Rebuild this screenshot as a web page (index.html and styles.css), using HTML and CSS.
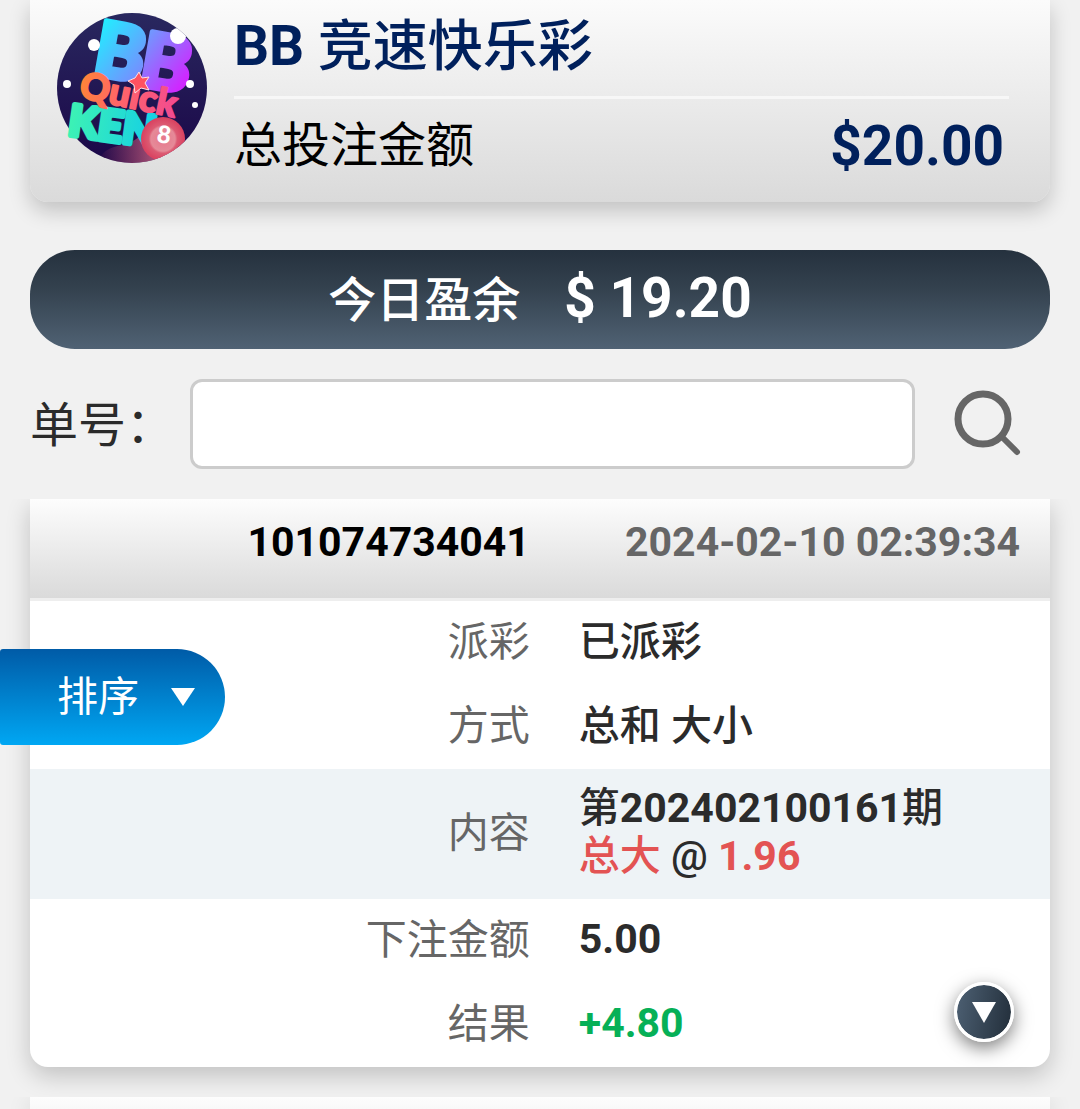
FILE: index.html
```html
<!DOCTYPE html>
<html lang="zh-CN">
<head>
<meta charset="utf-8">
<meta name="viewport" content="width=device-width, initial-scale=1">
<title>BB 竞速快乐彩</title>
<link rel="stylesheet" href="styles.css">
</head>
<body>
<main class="page">
  <header class="game">
    <svg class="game-logo" viewBox="0 0 150 150" role="img" aria-label="BB Quick KENO">
      <defs>
        <clipPath id="disc"><circle cx="75" cy="75" r="75"/></clipPath>
        <linearGradient id="night" x1="0" y1="0" x2="0" y2="1"><stop offset="0" stop-color="#29285f"/><stop offset="1" stop-color="#1b0748"/></linearGradient>
        <linearGradient id="blue" x1="0" y1="0" x2="1" y2="1"><stop offset=".1" stop-color="#1df3ff"/><stop offset=".9" stop-color="#7d86ff"/></linearGradient>
        <linearGradient id="violet" x1="0" y1="0" x2="1" y2="1"><stop offset=".1" stop-color="#6aa0ff"/><stop offset=".8" stop-color="#cf28ff"/></linearGradient>
        <linearGradient id="warm"><stop offset="0" stop-color="#ff8438"/><stop offset=".4" stop-color="#ff6568"/><stop offset="1" stop-color="#f24a92"/></linearGradient>
        <linearGradient id="mint"><stop offset="0" stop-color="#3df2b4"/><stop offset="1" stop-color="#14cfe6"/></linearGradient>
        <linearGradient id="trail"><stop offset="0" stop-color="#e05a78" stop-opacity="0"/><stop offset="1" stop-color="#f07f92"/></linearGradient>
        <radialGradient id="ball"><stop offset="0" stop-color="#e8788c"/><stop offset=".55" stop-color="#e58a98"/><stop offset=".65" stop-color="#dc5a72"/><stop offset="1" stop-color="#d9405f"/></radialGradient>
      </defs>
      <g clip-path="url(#disc)">
        <rect width="150" height="150" fill="url(#night)"/>
        <path d="M40 150 Q46 134 66 132 Q82 128 98 108 L126 144 L110 150Z" fill="url(#trail)"/>
      </g>
      <g class="logo-word logo-initials">
        <text x="34" y="61" transform="rotate(10 34 61)" fill="url(#blue)" stroke="url(#blue)">B</text>
        <text x="80" y="72" transform="rotate(10 80 72)" fill="url(#violet)" stroke="url(#violet)">B</text>
      </g>
      <text class="logo-word logo-keno" x="10" y="122" transform="rotate(8 10 122)" fill="url(#mint)" stroke="url(#mint)">KEN</text>
      <text class="logo-word logo-quick" x="21" y="84" transform="rotate(12 21 84)" fill="url(#warm)" stroke="url(#warm)">Quick</text>
      <g clip-path="url(#disc)">
        <path d="M82 59l3 6 7-1-4 6 4 7-8-2-6 5-1-8-6-4 7-3z" fill="#ff5260" stroke="#ffe0e4" stroke-width="1"/>
        <circle cx="106" cy="126" r="22" fill="url(#ball)"/>
        <g fill="#fff"><circle cx="37" cy="32" r="6"/><circle cx="121" cy="23" r="8"/><circle cx="10" cy="71" r="4"/><circle cx="133" cy="71" r="4"/><circle cx="138" cy="92" r="3"/></g>
      </g>
      <text class="logo-eight" x="99" y="129" transform="rotate(8 99 129)">8</text>
    </svg>
    <div class="game-info">
      <h1 class="game-title"><b>BB</b> 竞速快乐彩</h1>
      <div class="game-total"><span>总投注金额</span><strong class="amount">$20.00</strong></div>
    </div>
  </header>

  <section class="surplus"><span class="surplus-label">今日盈余</span><strong class="amount">$ 19.20</strong></section>

  <form class="search" role="search">
    <label class="search-label" for="order">单号：</label>
    <input class="search-input" id="order" type="text">
    <button class="search-button" type="button" aria-label="搜索">
      <svg viewBox="0 0 68 68" fill="none" stroke="#666" stroke-linecap="round"><circle cx="30" cy="29" r="25" stroke-width="7"/><path d="M48 46L64 62" stroke-width="6"/></svg>
    </button>
  </form>

  <article class="record">
    <div class="record-head"><strong>101074734041</strong><time datetime="2024-02-10T02:39:34">2024-02-10 02:39:34</time></div>
    <table class="record-table">
      <tbody>
        <tr><th scope="row">派彩</th><td>已派彩</td></tr>
        <tr><th scope="row">方式</th><td>总和 大小</td></tr>
        <tr class="shaded"><th scope="row">内容</th><td>第<b>202402100161</b>期<br><span class="pick">总大</span> @ <b class="pick">1.96</b></td></tr>
        <tr><th scope="row">下注金额</th><td class="number">5.00</td></tr>
        <tr><th scope="row">结果</th><td class="number win">+4.80</td></tr>
      </tbody>
    </table>
  </article>

  <article class="record record-next"></article>
</main>

<button class="sort" type="button">排序
  <svg class="arrow" viewBox="0 0 24 18"><path d="M0 0h24L12 18z" fill="#fff"/></svg>
</button>
<button class="scroll-down" type="button" aria-label="向下">
  <svg class="arrow" viewBox="0 0 24 21"><path d="M0 0h24L12 21z" fill="#fff"/></svg>
</button>
</body>
</html>
```
FILE: styles.css
```css
* { box-sizing: border-box; }

body {
  margin: 0;
  background: #f1f1f1;
  color: #2b2b2b;
  font: 500 41px/48px Roboto, "Noto Sans CJK SC", sans-serif;
}

b,
strong { font-weight: 700; }

button {
  padding: 0;
  border: 0;
  font: inherit;
  cursor: pointer;
}

.page {
  display: flex;
  flex-direction: column;
  min-height: 100vh;
  padding: 0 30px;
}

/* Game summary */
.game {
  display: flex;
  gap: 27px;
  padding: 0 41px 24px 27px;
  border-radius: 0 0 18px 18px;
  background: linear-gradient(#fbfbfb, #dadada);
  box-shadow: 0 9px 21px rgba(0, 0, 0, .2);
}

.game-logo {
  flex: none;
  width: 150px;
  height: 150px;
  margin-top: 13px;
  overflow: visible;
}

.game-info { flex: 1; }

.game-title {
  margin: 0;
  padding: 10px 0 14px;
  border-bottom: 3px solid #f7f7f7;
  color: #00205c;
  font-size: 55px;
  font-weight: 500;
  line-height: 72px;
}

.game-total {
  display: flex;
  align-items: center;
  justify-content: space-between;
  padding: 14px 5px 0 0;
  color: #000;
  font-size: 48px;
  font-weight: 400;
  line-height: 65px;
}

.amount {
  font-size: 55px;
  font-weight: 700;
}

.game-total .amount {
  padding-top: 2px;
  line-height: 63px;
  color: #00205c;
}

.logo-word {
  font-family: Lato, sans-serif;
  font-weight: 900;
  paint-order: stroke;
  stroke-linejoin: round;
}

.logo-initials {
  font-size: 76px;
  stroke-width: 5px;
}

.logo-quick {
  font-size: 37px;
  stroke-width: 2px;
}

.logo-keno {
  font-size: 43px;
  stroke-width: 5px;
}

.logo-eight {
  fill: #fff;
  font: 900 24px Lato, sans-serif;
}

/* Daily surplus */
.surplus {
  display: flex;
  align-items: center;
  justify-content: center;
  gap: 44px;
  margin-top: 48px;
  padding-bottom: 3px;
  border-radius: 45px;
  background: linear-gradient(#25313e, #34424f 40%, #506274);
  color: #fff;
  font-size: 48px;
  line-height: 96px;
}

.surplus-label {
  padding-top: 6px;
  line-height: 90px;
}

/* Order search */
.search {
  display: flex;
  align-items: center;
  margin: 30px 0;
}

.search-label {
  width: 160px;
  padding-top: 4px;
  font-size: 48px;
  font-weight: 400;
  white-space: nowrap;
}

.search-input {
  flex: 1;
  min-width: 0;
  height: 90px;
  padding: 0 20px;
  border: 3px solid #ccc;
  border-radius: 12px;
  background: #fff;
  font: inherit;
}

.search-button {
  width: 68px;
  height: 68px;
  margin: 0 29px 0 38px;
  background: none;
}

.search-button svg { display: block; }

/* Bet records */
.record {
  border-radius: 0 0 18px 18px;
  background: #fff;
  box-shadow: 0 9px 24px rgba(0, 0, 0, .2);
  clip-path: inset(0 -30px -40px);
}

.record-head {
  display: grid;
  grid-template-columns: 49% 1fr;
  padding: 18px 0 30px;
  border-bottom: 3px solid #eee;
  background: linear-gradient(#fdfdfd, #dadada);
  color: #666;
  font-weight: 700;
  line-height: 51px;
  text-align: right;
}

.record-head strong { color: #000; }

.record-head time { padding-right: 30px; }

.record-table {
  width: 100%;
  border-collapse: collapse;
}

.record-table th,
.record-table td {
  padding: 17px 0 19px;
  text-align: left;
}

.record-table th {
  width: 49%;
  color: #666;
  font-weight: 400;
  text-align: right;
}

.record-table td { padding-left: 49px; }

.record-table .number {
  padding-top: 16px;
  padding-bottom: 20px;
  font-weight: 700;
}

.record-table .shaded { background: #eef3f6; }

.record-table .shaded td {
  padding-top: 15px;
  padding-bottom: 19px;
}

.pick { color: #e35353; }

.win { color: #06b057; }

.record-next {
  flex: 1;
  margin-top: 30px;
  border-radius: 0;
  background: linear-gradient(#fdfdfd, #dadada 99px);
}

/* Floating controls */
.sort {
  position: fixed;
  top: 649px;
  left: 0;
  display: flex;
  align-items: center;
  gap: 32px;
  padding: 24px 30px 24px 57px;
  border-radius: 3px 48px 48px 3px;
  background: linear-gradient(#005ba7, #00a7f3);
  color: #fff;
  font-weight: 400;
}

.arrow {
  display: block;
  width: 24px;
}

.scroll-down {
  position: fixed;
  right: 66px;
  bottom: 67px;
  display: grid;
  place-items: center;
  width: 60px;
  height: 60px;
  border: 3px solid #fff;
  border-radius: 50%;
  background: linear-gradient(100deg, #4d6073, #222e3a);
  background-clip: padding-box;
  box-shadow: 0 6px 18px rgba(0, 0, 0, .5);
}
```
